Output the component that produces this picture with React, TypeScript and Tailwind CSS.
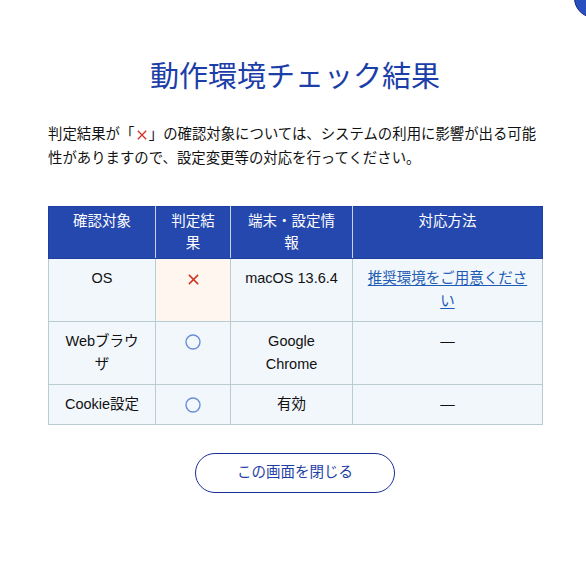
import React from "react"

// small drawn marks used in the result column
function CrossMark({ size = 10 }: { size?: number }) {
    return (
        <svg width={size} height={size} viewBox="0 0 10 10" className="inline-block align-middle">
            <path d="M0.8 0.8 L9.2 9.2 M9.2 0.8 L0.8 9.2" stroke="#d2321f" strokeWidth="1.3" fill="none" />
        </svg>
    )
}

function CircleMark() {
    return (
        <svg width="16" height="16" viewBox="0 0 16 16" className="inline-block align-middle">
            <circle cx="8" cy="8" r="7" stroke="#6a8dd6" strokeWidth="1.4" fill="none" />
        </svg>
    )
}

type Row = {
    target: string
    ok: boolean
    info: React.ReactNode
    action: React.ReactNode
}

const rows: Row[] = [
    {
        target: "OS",
        ok: false,
        info: "macOS 13.6.4",
        action: (
            <a href="#" className="text-[#1d5cb4] underline underline-offset-2">
                推奨環境をご用意ください
            </a>
        ),
    },
    { target: "Webブラウザ", ok: true, info: "Google Chrome", action: "—" },
    { target: "Cookie設定", ok: true, info: "有効", action: "—" },
]

export default function App() {
    return (
        <div className="relative min-h-[564px] overflow-hidden bg-white font-['Liberation_Sans','Noto_Sans_CJK_JP',sans-serif] text-[#111]">
            {/* corner button, mostly off screen */}
            <div className="absolute -right-[28px] -top-[22px] h-[40px] w-[40px] rounded-full border border-[#142a78] bg-[#2a4fbf]" />

            <div className="pl-[48px] pr-[44px] pt-[57px]">
                <h1 className="text-center text-[29px] leading-[40px] font-normal text-[#1b3ea8]">
                    動作環境チェック結果
                </h1>

                <p className="mt-[25px] text-[14.4px] leading-[24px]">
                    <span className="block whitespace-nowrap">
                        判定結果が「<span className="inline-block w-[14.4px] text-center"><CrossMark size={10} /></span>」の確認対象については、システムの利用に影響が出る可能
                    </span>
                    <span className="block whitespace-nowrap">性がありますので、設定変更等の対応を行ってください。</span>
                </p>

                <table className="mt-[36px] w-[494px] table-fixed border-collapse text-[14.5px]">
                    <thead>
                        <tr className="bg-[#2448ad] text-white leading-[21.5px]">
                            <th className="w-[107px] border border-[#1f3f9f] border-r-[#c7d2ee] px-3 py-[4px] align-top font-normal">確認対象</th>
                            <th className="w-[75px] border border-[#1f3f9f] border-x-[#c7d2ee] px-3 py-[4px] align-top font-normal">判定結果</th>
                            <th className="w-[122px] border border-[#1f3f9f] border-x-[#c7d2ee] px-3 py-[4px] align-top font-normal">端末・設定情報</th>
                            <th className="w-[190px] border border-[#1f3f9f] border-l-[#c7d2ee] px-3 py-[4px] align-top font-normal">対応方法</th>
                        </tr>
                    </thead>
                    <tbody className="leading-[23px]">
                        {rows.map((r) => (
                            <tr key={r.target} className="bg-[#f2f7fc]">
                                <td className="border border-[#b9cccf] px-3 py-[8px] text-center align-top">{r.target}</td>
                                <td className={"border border-[#b9cccf] px-3 py-[8px] text-center align-top " + (r.ok ? "" : "bg-[#fff6ef]")}>
                                    {r.ok ? <CircleMark /> : <CrossMark size={11} />}
                                </td>
                                <td className="border border-[#b9cccf] px-3 py-[8px] text-center align-top">{r.info}</td>
                                <td className="border border-[#b9cccf] px-3 py-[8px] text-center align-top">{r.action}</td>
                            </tr>
                        ))}
                    </tbody>
                </table>

                <div className="mt-[28px] flex justify-center">
                    <button className="h-[40px] w-[200px] rounded-full border border-[#1a2f96] bg-white text-[14.5px] text-[#1e3ea6]">
                        この画面を閉じる
                    </button>
                </div>
            </div>
        </div>
    )
}
